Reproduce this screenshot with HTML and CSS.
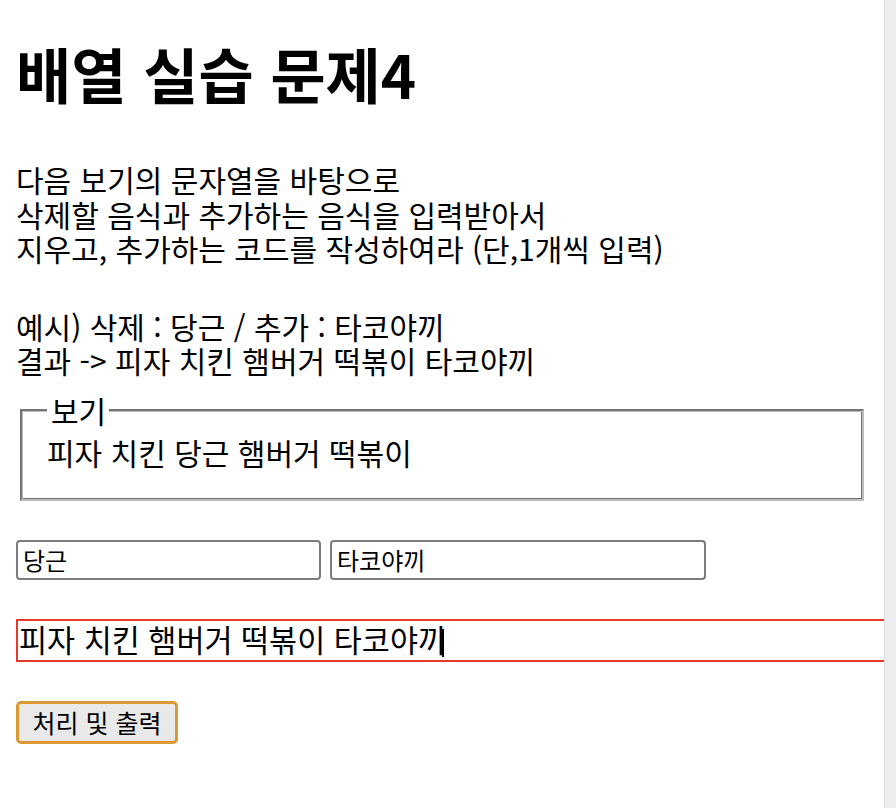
FILE: index.html
```html
<!DOCTYPE html>
<html lang="ko">
<head>
<meta charset="utf-8">
<title>배열 실습 문제4</title>
<link rel="stylesheet" href="styles.css">
</head>
<body>
<div class="page">
  <main class="content">
    <h1 class="title">배열 실습 문제4</h1>
    <p class="desc">다음 보기의 문자열을 바탕으로<br>삭제할 음식과 추가하는 음식을 입력받아서<br>지우고, 추가하는 코드를 작성하여라 (단,1개씩 입력)</p>
    <p class="desc example">예시) 삭제 : 당근 / 추가 : 타코야끼<br>결과 -&gt; 피자 치킨 햄버거 떡볶이 타코야끼</p>
    <fieldset class="box">
      <legend class="box-legend">보기</legend>
      피자 치킨 당근 햄버거 떡볶이
    </fieldset>
    <div class="inputs">
      <input class="field field-del" type="text" value="당근">
      <input class="field field-add" type="text" value="타코야끼">
    </div>
    <div class="result">피자 치킨 햄버거 떡볶이 타코야끼<span class="caret"></span></div>
    <button class="btn" type="button">처리 및 출력</button>
  </main>
  <div class="scrollbar"></div>
</div>
</body>
</html>
```

FILE: styles.css
```css
html, body {
  margin: 0;
  padding: 0;
  background: #fff;
}

body {
  font-family: "Noto Sans CJK KR", "Noto Sans", sans-serif;
  color: #000;
  overflow: hidden;
}

.page {
  display: flex;
  width: 896px;
  height: 808px;
}

.content {
  flex: 0 0 884px;
  width: 884px;
  padding: 38px 16px 0 16px;
  overflow: hidden;
  box-sizing: border-box;
}

.scrollbar {
  flex: 1;
  background: #ededed;
  border-left: 1px solid #dcdcdc;
}

.title {
  margin: 0;
  font-size: 60px;
  line-height: 70px;
  font-weight: 700;
}

.desc {
  margin: 54px 0 0;
  font-size: 30px;
  line-height: 34.5px;
}

.example {
  margin-top: 43px;
}

.box {
  margin: 17px 4px 0 4px;
  padding: 9px 24px 29px 25px;
  border: 2px solid;
  border-color: #747474 #bdbdbd #bdbdbd #747474;
  box-shadow: inset 1px 1px 0 #bdbdbd, inset -1px -1px 0 #747474;
  font-size: 30px;
  line-height: 36px;
}

.box-legend {
  padding: 0 3px 0 4px;
  margin-left: 0;
  background: #fff;
  font-size: 30px;
  line-height: 30px;
}

.inputs {
  display: flex;
  gap: 9px;
  margin-top: 39px;
}

.field {
  box-sizing: border-box;
  height: 40px;
  margin: 0;
  padding: 0 5px;
  border: 2px solid #7c7c7c;
  border-radius: 4px;
  font-family: "Noto Sans CJK KR", sans-serif;
  font-size: 24px;
  color: #000;
  background: #fff;
  outline: none;
}

.field-del {
  width: 305px;
}

.field-add {
  width: 376px;
}

.result {
  box-sizing: border-box;
  width: 900px;
  height: 43px;
  margin-top: 39px;
  padding: 0 0 0 1px;
  border: 2px solid #e4392b;
  font-size: 30.5px;
  line-height: 37px;
  white-space: nowrap;
}

.caret {
  display: inline-block;
  width: 2px;
  height: 28px;
  background: #000;
  vertical-align: -5px;
  margin-left: -4px;
}

.btn {
  display: block;
  box-sizing: border-box;
  width: 162px;
  height: 43px;
  margin-top: 39px;
  padding: 0;
  border: 3px solid #dd9a33;
  border-radius: 5px;
  background: #e9e9e9;
  font-family: "Noto Sans CJK KR", sans-serif;
  font-size: 25px;
  color: #000;
}
```
